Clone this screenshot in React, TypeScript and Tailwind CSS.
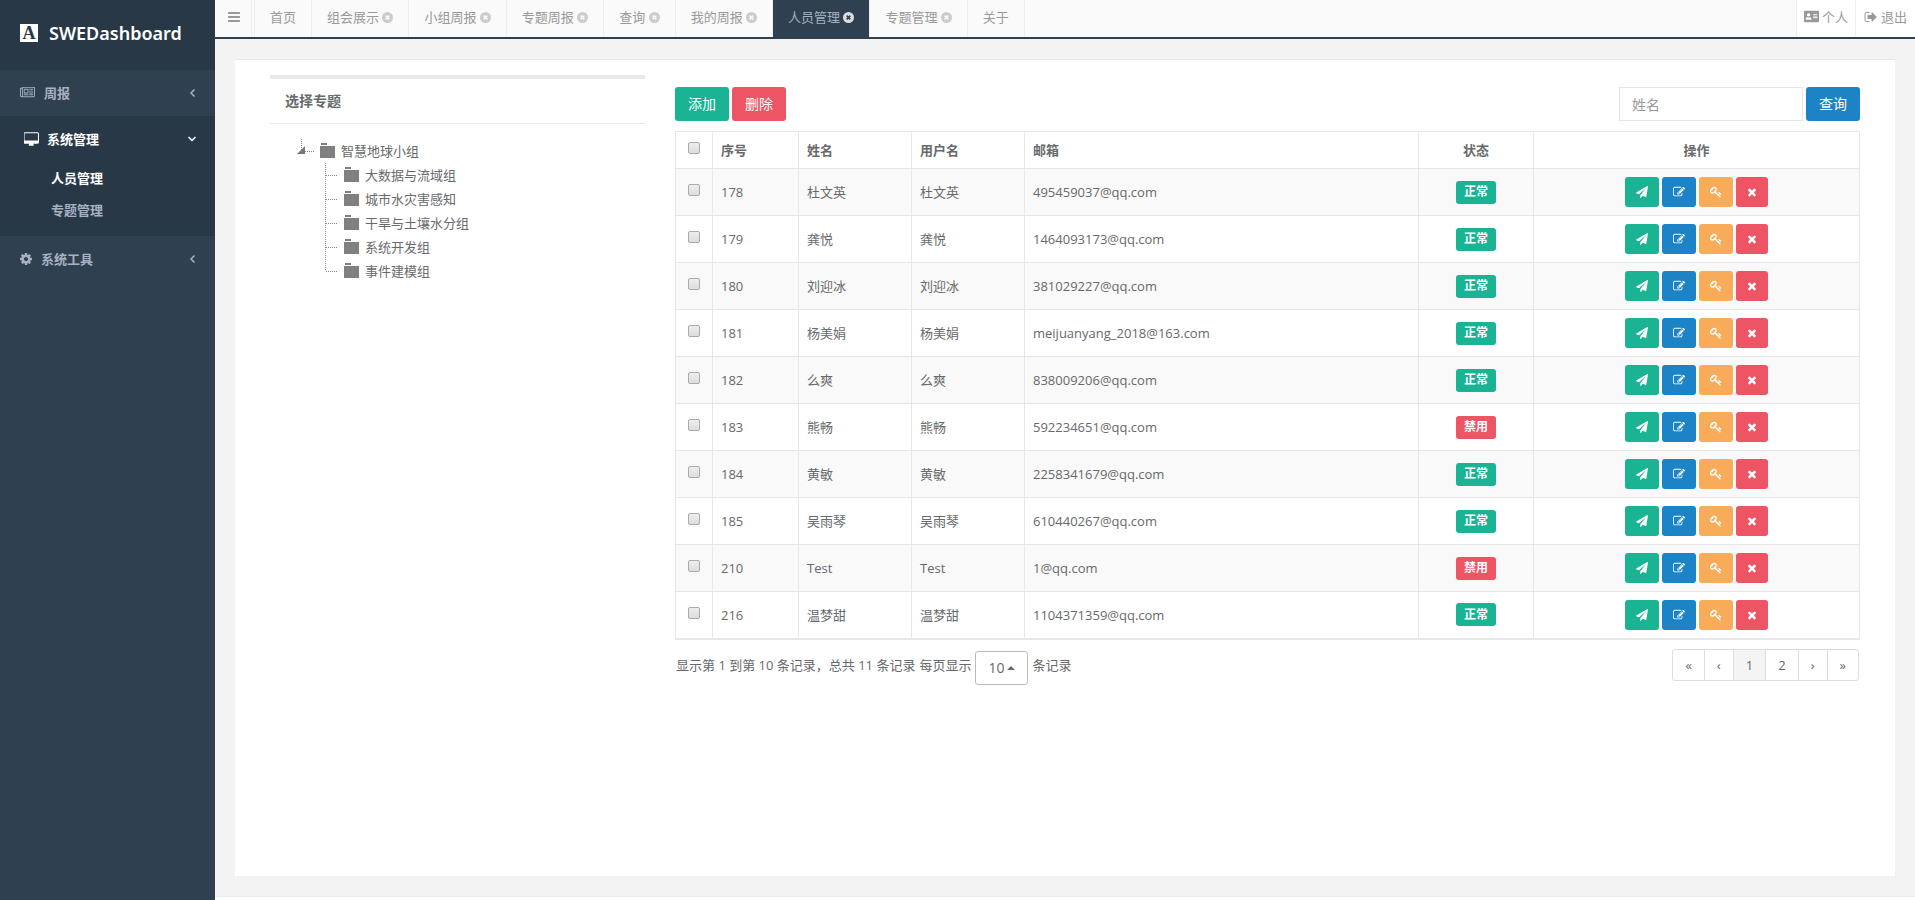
import { useState } from 'react';
import type { ReactNode } from 'react';
import clsx from 'clsx';
import { FaAddressCard } from 'react-icons/fa';

const icons = {
  bars: 'M1664 1344v128q0 26-19 45t-45 19h-1408q-26 0-45-19t-19-45v-128q0-26 19-45t45-19h1408q26 0 45 19t19 45zm0-512v128q0 26-19 45t-45 19h-1408q-26 0-45-19t-19-45v-128q0-26 19-45t45-19h1408q26 0 45 19t19 45zm0-512v128q0 26-19 45t-45 19h-1408q-26 0-45-19t-19-45v-128q0-26 19-45t45-19h1408q26 0 45 19t19 45z',
  newspaper:
    'M1024 512h-384v384h384v-384zm128 640v128h-640v-128h640zm0-768v640h-640v-640h640zm640 768v128h-512v-128h512zm0-256v128h-512v-128h512zm0-256v128h-512v-128h512zm0-256v128h-512v-128h512zm-1536 960v-960h-128v960q0 26 19 45t45 19 45-19 19-45zm1664 0v-1088h-1536v1088q0 33-11 64h1483q26 0 45-19t19-45zm128-1216v1216q0 80-56 136t-136 56h-1664q-80 0-136-56t-56-136v-1088h256v-128h1792z',
  desktop:
    'M1728 992v-832q0-13-9.5-22.5t-22.5-9.5h-1600q-13 0-22.500 9.500t-9.500 22.500v832q0 13 9.500 22.500t22.500 9.500h1600q13 0 22.500-9.500t9.500-22.500zm128-832v1088q0 66-47 113t-113 47h-544q0 37 16 77.500t32 71 16 43.500q0 26-19 45t-45 19h-512q-26 0-45-19t-19-45q0-14 16-44t32-70 16-78h-544q-66 0-113-47t-47-113v-1088q0-66 47-113t113-47h1600q66 0 113 47t47 113z',
  cog: 'M1152 896q0-106-75-181t-181-75-181 75-75 181 75 181 181 75 181-75 75-181zm512-109v222q0 12-8 23t-20 13l-185 28q-19 54-39 91 35 50 107 138 10 12 10 25t-9 23q-27 37-99 108t-94 71q-12 0-26-9l-138-108q-44 23-91 38-16 136-29 186-7 28-36 28h-222q-14 0-24.500-8.500t-11.500-21.500l-28-184q-49-16-90-37l-141 107q-10 9-25 9-14 0-25-11-126-114-165-168-7-10-7-23 0-12 8-23 15-21 51-66.500t54-70.500q-27-50-41-99l-183-27q-13-2-21-12.500t-8-23.500v-222q0-12 8-23t19-13l186-28q14-46 39-92-40-57-107-138-10-12-10-24 0-10 9-23 26-36 98.500-107.500t94.500-71.500q13 0 26 10l138 107q44-23 91-38 16-136 29-186 7-28 36-28h222q14 0 24.500 8.500t11.500 21.500l28 184q49 16 90 37l142-107q9-9 24-9 13 0 25 10 129 119 165 170 7 8 7 22 0 12-8 23-15 21-51 66.500t-54 70.500q26 50 41 98l183 28q13 2 21 12.500t8 23.500z',
  signOut:
    'M704 1440q0 4 1 20t.5 26.500-3 23.500-10 19.500-20.500 6.500h-320q-119 0-203.500-84.500t-84.500-203.500v-704q0-119 84.500-203.500t203.500-84.500h320q13 0 22.500 9.500t9.500 22.500q0 4 1 20t.5 26.500-3 23.500-10 19.500-20.500 6.500h-320q-66 0-113 47t-47 113v704q0 66 47 113t113 47h312l11.500 1 11.500 3 8 5.500 7 9 2 13.500zm928-544q0 26-19 45l-544 544q-19 19-45 19t-45-19-19-45v-288h-448q-26 0-45-19t-19-45v-384q0-26 19-45t45-19h448v-288q0-26 19-45t45-19 45 19l544 544q19 19 19 45z',
  plane:
    'M1764 11q33 24 27 64l-256 1536q-5 29-32 45-14 8-31 8-11 0-24-5l-453-185-242 295q-18 23-49 23-13 0-22-4-19-7-30.500-23.500t-11.500-36.500v-349l864-1059-1069 925-395-162q-37-14-40-55-2-40 32-59l1664-960q15-9 32-9 20 0 36 11z',
  edit: 'M888 1184l116-116-152-152-116 116v56h96v96h56zm440-720q-16-16-33 1l-350 350q-17 17-1 33t33-1l350-350q17-17 1-33zm80 594v190q0 119-84.500 203.500t-203.500 84.500h-832q-119 0-203.500-84.500t-84.500-203.500v-832q0-119 84.500-203.500t203.500-84.500h832q63 0 117 25 15 7 18 23 3 17-9 29l-49 49q-14 14-32 8-23-6-45-6h-832q-66 0-113 47t-47 113v832q0 66 47 113t113 47h832q66 0 113-47t47-113v-126q0-13 9-22l64-64q15-15 35-7t20 29zm-96-738l288 288-672 672h-288v-288zm444 132l-92 92-288-288 92-92q28-28 68-28t68 28l152 152q28 28 28 68t-28 68z',
  key: 'M832 512q0-80-56-136t-136-56-136 56-56 136q0 42 19 83-41-19-83-19-80 0-136 56t-56 136 56 136 136 56 136-56 56-136q0-42-19-83 41 19 83 19 80 0 136-56t56-136zm851 704q0 17-49 66t-66 49q-9 0-28.500-16t-36.500-33-38.500-40-24.500-26l-96 96 220 220q28 28 28 68 0 42-39 81t-81 39q-40 0-68-28l-671-671q-176 131-365 131-163 0-265.500-102.500t-102.500-265.500q0-160 95-313t248-248 313-95q163 0 265.500 102.500t102.500 265.500q0 189-131 365l355 355 96-96q-3-3-26-24.500t-40-38.500-33-36.500-16-28.500q0-17 49-66t66-49q13 0 23 10 6 6 46 44.500t82 79.500 86.500 86 73 78 28.500 41z',
  times:
    'M1490 1322q0 40-28 68l-136 136q-28 28-68 28t-68-28l-294-294-294 294q-28 28-68 28t-68-28l-136-136q-28-28-28-68t28-68l294-294-294-294q-28-28-28-68t28-68l136-136q28-28 68-28t68 28l294 294 294-294q28-28 68-28t68 28l136 136q28 28 28 68t-28 68l-294 294 294 294q28 28 28 68z',
};

interface IconProps {
  name: keyof typeof icons;
  className?: string;
  viewBox?: string;
}

function Icon({ name, className, viewBox = '0 0 1792 1792' }: IconProps) {
  return (
    <svg viewBox={viewBox} fill="currentColor" aria-hidden="true" className={clsx('shrink-0', className)}>
      <path d={icons[name]} />
    </svg>
  );
}

function Chevron({ open }: { open?: boolean }) {
  return (
    <svg viewBox="0 0 10 10" fill="none" stroke="currentColor" strokeWidth="1.5" aria-hidden="true" className="ml-auto size-[10px]">
      <path d={open ? 'M1.500 3l3.500 3.500L8.500 3' : 'M7.500 1.500L4 5l3.500 3.500'} />
    </svg>
  );
}

function CloseIcon({ active }: { active: boolean }) {
  return (
    <svg viewBox="0 0 12 12" aria-hidden="true" className="inline-block size-[11px] overflow-visible align-[-1px]">
      <circle cx="6" cy="6" r="6" fill={active ? '#ddd' : '#ccc'} />
      <path d="M4 4l4 4M8 4l-4 4" stroke={active ? '#2f4050' : '#fafafa'} strokeWidth="1.8" />
    </svg>
  );
}

const tabs = [
  { title: '首页' },
  { title: '组会展示', closable: true },
  { title: '小组周报', closable: true },
  { title: '专题周报', closable: true },
  { title: '查询', closable: true },
  { title: '我的周报', closable: true },
  { title: '人员管理', closable: true },
  { title: '专题管理', closable: true },
  { title: '关于' },
];

const groups = ['大数据与流域组', '城市水灾害感知', '干旱与土壤水分组', '系统开发组', '事件建模组'];

const users = [
  { id: 178, name: '杜文英', email: '495459037@qq.com', enabled: true },
  { id: 179, name: '龚悦', email: '1464093173@qq.com', enabled: true },
  { id: 180, name: '刘迎冰', email: '381029227@qq.com', enabled: true },
  { id: 181, name: '杨美娟', email: 'meijuanyang_2018@163.com', enabled: true },
  { id: 182, name: '么爽', email: '838009206@qq.com', enabled: true },
  { id: 183, name: '熊畅', email: '592234651@qq.com', enabled: false },
  { id: 184, name: '黄敏', email: '2258341679@qq.com', enabled: true },
  { id: 185, name: '吴雨琴', email: '610440267@qq.com', enabled: true },
  { id: 210, name: 'Test', email: '1@qq.com', enabled: false },
  { id: 216, name: '温梦甜', email: '1104371359@qq.com', enabled: true },
];

function Sidebar() {
  return (
    <aside className="w-[215px] shrink-0 bg-[#2f4050] font-semibold text-[#a7b1c2]">
      <div className="flex h-[70px] items-center bg-[#293846] px-5 pb-1 text-white">
        <span className="flex size-[18px] items-center justify-center bg-white font-['Liberation_Serif',serif] text-lg leading-none font-bold text-[#293846]">
          A
        </span>
        <span className="ml-[11px] font-['Noto_Sans',sans-serif] text-lg">SWEDashboard</span>
      </div>
      <nav>
        <a href="#weekly" className="flex h-[46px] items-center pr-[18px] pb-px pl-5">
          <Icon name="newspaper" viewBox="0 0 2048 1792" className="mr-[9px] h-[13px] w-[15px]" />
          周报
          <Chevron />
        </a>
        <div className="bg-[#293846] pb-[10px]">
          <a href="#system" className="flex h-[46px] items-center pr-[18px] pb-px pl-6 text-white">
            <Icon name="desktop" viewBox="0 0 1856 1664" className="mr-2 h-[14px] w-[15px]" />
            系统管理
            <Chevron open />
          </a>
          <a href="#users" className="flex h-8 items-center pb-px pl-[51px] text-white">
            人员管理
          </a>
          <a href="#topics" className="flex h-8 items-center pb-px pl-[51px]">
            专题管理
          </a>
        </div>
        <a href="#tools" className="flex h-[46px] items-center pr-[18px] pb-px pl-5">
          <Icon name="cog" viewBox="128 128 1536 1536" className="mr-[9px] size-3" />
          系统工具
          <Chevron />
        </a>
      </nav>
    </aside>
  );
}

function TopBar() {
  const [active, setActive] = useState('人员管理');

  return (
    <header className="flex h-[39px] border-b-2 border-[#2f4050] bg-[#fafafa] text-[#999]">
      <button type="button" aria-label="菜单" className="mr-[2px] flex w-[37px] items-center justify-center border-r border-[#eee] pb-1 pl-[2px]">
        <Icon name="bars" className="size-[14px]" />
      </button>
      <nav className="flex border-l border-[#eee]">
        {tabs.map((tab) => (
          <button
            key={tab.title}
            type="button"
            onClick={() => setActive(tab.title)}
            className={clsx(
              'border-r border-[#eee] px-[15px] pb-1 whitespace-nowrap',
              active === tab.title && 'bg-[#2f4050] text-[#a7b1c2]',
            )}
          >
            {tab.title} {tab.closable && <CloseIcon active={active === tab.title} />}
          </button>
        ))}
      </nav>
      <div className="ml-auto flex bg-white">
        <a href="#profile" className="flex items-center gap-[3px] border-l border-[#eee] px-[7px] pb-1">
          <FaAddressCard className="size-[15px]" />
          个人
        </a>
        <a href="#logout" className="flex items-center gap-1 border-l border-[#eee] px-2 pb-1">
          <Icon name="signOut" viewBox="0 128 1664 1536" className="h-3 w-[13px]" />
          退出
        </a>
      </div>
    </header>
  );
}

function Folder() {
  return (
    <svg viewBox="0 0 15 24" fill="#808080" aria-hidden="true" className="mr-[6px] h-6 w-[15px]">
      <path d="M1 4h6v2H1zM0 7h15v12H0z" />
    </svg>
  );
}

function GroupTree() {
  return (
    <section className="border-t-4 border-[#e7eaec]">
      <h5 className="border-b border-[#e7eaec] px-[15px] py-3 text-sm font-semibold">选择专题</h5>
      <ul className="px-[26px] pt-[15px]">
        <li>
          <div className="flex h-6 items-center">
            <svg viewBox="0 0 24 24" stroke="#888" strokeDasharray="1 1" aria-hidden="true" className="size-6">
              <path d="M5.500 0v12M9 12.500h9" />
              <path d="M1 15h8V7z" fill="#777" stroke="none" />
            </svg>
            <Folder />
            智慧地球小组
          </div>
          <ul className="pl-6">
            {groups.map((group, i) => (
              <li key={group} className="flex h-6 items-center">
                <svg viewBox="0 0 24 24" stroke="#888" strokeDasharray="1 1" aria-hidden="true" className="size-6">
                  <path d={i === groups.length - 1 ? 'M5.500 0v12M6 12.500h12' : 'M5.500 0v24M6 12.500h12'} />
                </svg>
                <Folder />
                {group}
              </li>
            ))}
          </ul>
        </li>
      </ul>
    </section>
  );
}

function Checkbox({ label }: { label: string }) {
  return (
    <input
      type="checkbox"
      aria-label={label}
      className="mx-auto mb-1 block size-3 appearance-none rounded-[2px] border border-[#aaa] bg-linear-to-b from-[#eee] to-[#ddd] checked:bg-[#1c84c6]"
    />
  );
}

interface ActionButtonProps {
  label: string;
  icon: keyof typeof icons;
  className: string;
}

function ActionButton({ label, icon, className }: ActionButtonProps) {
  return (
    <button type="button" title={label} className={clsx('flex h-[30px] items-center justify-center rounded-[3px] text-white', className)}>
      <Icon name={icon} className="size-3" />
    </button>
  );
}

function Th({ children, center }: { children: ReactNode; center?: boolean }) {
  return (
    <th className={clsx('h-[37px] border border-[#e7e7e7] px-2 font-semibold', center ? 'text-center' : 'text-left')}>{children}</th>
  );
}

function Td({ children }: { children: ReactNode }) {
  return <td className="h-[47px] border border-[#e7e7e7] px-2">{children}</td>;
}

function UserTable() {
  return (
    <table className="w-full table-fixed border-collapse border-b-2 border-[#e7e7e7]">
      <colgroup>
        <col className="w-[37px]" />
        <col className="w-[86px]" />
        <col className="w-[113px]" />
        <col className="w-[113px]" />
        <col />
        <col className="w-[115px]" />
        <col className="w-[326px]" />
      </colgroup>
      <thead>
        <tr>
          <Th center>
            <Checkbox label="全选" />
          </Th>
          <Th>序号</Th>
          <Th>姓名</Th>
          <Th>用户名</Th>
          <Th>邮箱</Th>
          <Th center>状态</Th>
          <Th center>操作</Th>
        </tr>
      </thead>
      <tbody>
        {users.map((user) => (
          <tr key={user.id} className="odd:bg-[#f9f9f9]">
            <Td>
              <Checkbox label={user.name} />
            </Td>
            <Td>{user.id}</Td>
            <Td>{user.name}</Td>
            <Td>{user.name}</Td>
            <Td>{user.email}</Td>
            <Td>
              <span
                className={clsx(
                  'mx-auto flex h-[23px] w-10 items-center justify-center rounded-[3px] text-xs font-bold text-white',
                  user.enabled ? 'bg-[#1ab394]' : 'bg-[#ed5565]',
                )}
              >
                {user.enabled ? '正常' : '禁用'}
              </span>
            </Td>
            <Td>
              <div className="flex justify-center gap-[3px]">
                <ActionButton label="发送" icon="plane" className="w-[34px] bg-[#1ab394]" />
                <ActionButton label="编辑" icon="edit" className="w-[34px] bg-[#1c84c6]" />
                <ActionButton label="重置密码" icon="key" className="w-[34px] bg-[#f8ac59]" />
                <ActionButton label="删除" icon="times" className="w-8 bg-[#ed5565]" />
              </div>
            </Td>
          </tr>
        ))}
      </tbody>
    </table>
  );
}

function Pagination() {
  const [page, setPage] = useState('1');

  return (
    <div className="flex h-8 divide-x divide-[#ddd] overflow-hidden rounded-[3px] border border-[#ddd]">
      {['«', '‹', '1', '2', '›', '»'].map((item) => (
        <button
          key={item}
          type="button"
          onClick={() => /\d/.test(item) && setPage(item)}
          className={clsx('px-3', page === item && 'bg-[#f4f4f4]')}
        >
          {item}
        </button>
      ))}
    </div>
  );
}

export default function App() {
  return (
    <div className="flex min-h-screen bg-[#f3f3f4] font-['Open_Sans','Noto_Sans_CJK_SC',sans-serif] text-[13px] leading-5 text-[#676a6c]">
      <Sidebar />
      <div className="flex min-w-0 flex-1 flex-col">
        <TopBar />
        <main className="flex flex-1 flex-col p-5">
          <div className="flex flex-1 items-start border-t border-[#e7eaec] bg-white px-5 pt-[15px]">
            <div className="w-1/4 px-[15px]">
              <GroupTree />
            </div>
            <div className="w-3/4 px-[15px] pt-3">
              <div className="mb-[10px] flex gap-[3px] text-sm">
                <button type="button" className="h-[34px] rounded-[3px] bg-[#1ab394] px-[13px] text-white">
                  添加
                </button>
                <button type="button" className="h-[34px] rounded-[3px] bg-[#ed5565] px-[13px] text-white">
                  删除
                </button>
                <input
                  type="text"
                  aria-label="姓名"
                  placeholder="姓名"
                  className="ml-auto h-[34px] w-[184px] border border-[#e5e6e7] px-3 placeholder:text-[#999]"
                />
                <button type="button" className="h-[34px] rounded-[3px] bg-[#1c84c6] px-[13px] text-white">
                  查询
                </button>
              </div>
              <UserTable />
              <div className="flex items-start justify-between px-px pt-[9px]">
                <div className="flex items-start gap-1">
                  <span className="pt-[6px]">显示第 1 到第 10 条记录，总共 11 条记录</span>
                  <label htmlFor="page-size" className="pt-[6px]">
                    每页显示
                  </label>
                  <button
                    id="page-size"
                    type="button"
                    className="mt-[2px] flex h-[34px] items-center gap-[3px] rounded-[3px] border border-[#bbb] px-3 text-sm"
                  >
                    10
                    <svg viewBox="0 0 8 4" fill="currentColor" aria-hidden="true" className="h-1 w-2">
                      <path d="M4 0l4 4H0z" />
                    </svg>
                  </button>
                  <span className="pt-[6px]">条记录</span>
                </div>
                <Pagination />
              </div>
            </div>
          </div>
        </main>
        <footer className="h-1 border-t border-[#e7eaec] bg-white" />
      </div>
    </div>
  );
}
